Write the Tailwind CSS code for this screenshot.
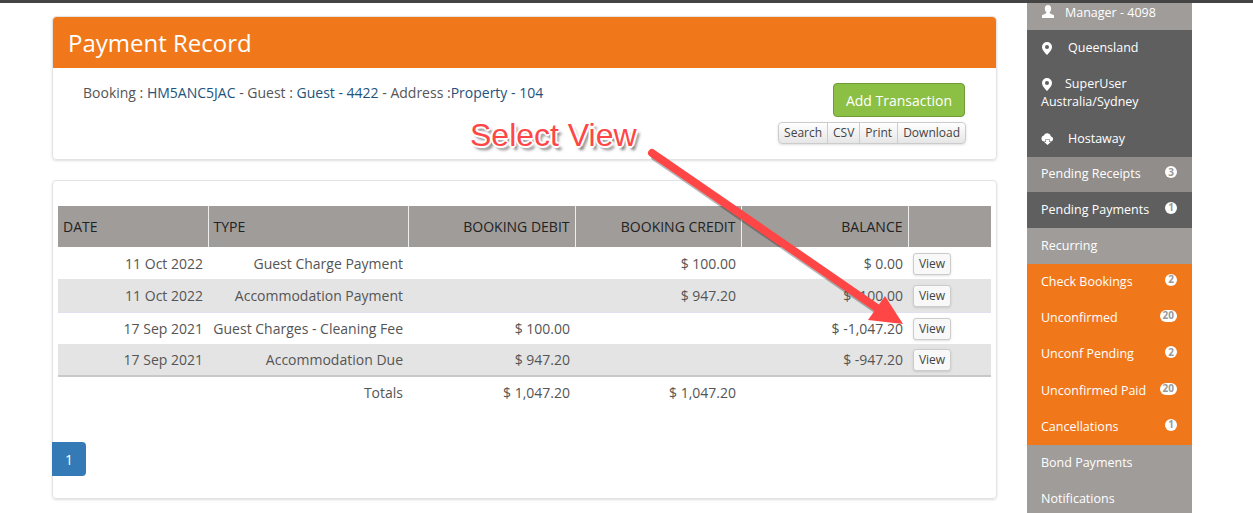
<!DOCTYPE html>
<html lang="en">
<head>
    <meta charset="UTF-8">
    <title>Payment Record</title>
    <script src="https://cdn.jsdelivr.net/npm/@tailwindcss/browser@4"></script>
</head>
<body class="relative h-[513px] w-[1253px] overflow-hidden bg-white font-['Open_Sans',sans-serif] text-[14px] text-[#555]">
    <div class="h-[3px] bg-[#444]"></div>
    <div class="flex items-start">
        <!-- main column -->
        <div class="ml-[52px] w-[945px] pt-[13px]">
            <div class="h-[144px] rounded border border-[#e3e3e3] shadow-sm">
                <div class="flex h-[51px] items-center rounded-t bg-[#f0781a] pl-[15px] text-[24px] text-white">Payment Record</div>
                <div class="flex justify-between pl-[30px] pr-[30px]">
                    <p class="pt-[15px] leading-[20px]">Booking : <span class="text-[#23527c]">HM5ANC5JAC</span> - Guest : <span class="text-[#23527c]">Guest - 4422</span> - Address :<span class="text-[#23527c]">Property - 104</span></p>
                    <div class="flex flex-col items-end pt-[15px]">
                        <button class="mr-px h-[34px] w-[132px] rounded border border-[#6f9c36] bg-[#8cc044] text-[14px] text-white">Add Transaction</button>
                        <div class="mt-[5px] flex h-[22px] rounded border border-[#ccc] bg-gradient-to-b from-white to-[#e6e6e6] text-[12px] leading-[20px] text-[#444] shadow-sm">
                            <span class="border-r border-[#ccc] px-[5px]">Search</span>
                            <span class="border-r border-[#ccc] px-[5px]">CSV</span>
                            <span class="border-r border-[#ccc] px-[5px]">Print</span>
                            <span class="px-[5px]">Download</span>
                        </div>
                    </div>
                </div>
            </div>
            <div class="relative mt-[20px] h-[319px] rounded border border-[#e3e3e3] px-[5px] pt-[25px] shadow-sm">
                <table class="w-[933px] table-fixed border-collapse">
                    <colgroup>
                        <col class="w-[150px]"><col class="w-[200px]"><col class="w-[167px]"><col class="w-[166px]"><col class="w-[167px]"><col class="w-[83px]">
                    </colgroup>
                    <thead>
                        <tr class="h-[41px] bg-[#a09c9a] text-[#222]">
                            <th class="px-[5px] text-left font-normal">DATE</th>
                            <th class="border-l border-[#eee] px-[5px] text-left font-normal">TYPE</th>
                            <th class="border-l border-[#eee] px-[5px] text-right font-normal">BOOKING DEBIT</th>
                            <th class="border-l border-[#eee] px-[5px] text-right font-normal">BOOKING CREDIT</th>
                            <th class="border-l border-[#eee] px-[5px] text-right font-normal">BALANCE</th>
                            <th class="border-l border-[#eee]"></th>
                        </tr>
                    </thead>
                    <tbody class="text-right">
                        <tr class="h-[32px]">
                            <td class="px-[5px]">11 Oct 2022</td><td class="px-[5px]">Guest Charge Payment</td><td class="px-[5px]"></td><td class="px-[5px]">$ 100.00</td><td class="px-[5px]">$ 0.00</td>
                            <td class="px-[5px] text-left"><button class="h-[22px] w-[38px] rounded-[3px] border border-[#ccc] bg-[#f8f8f8] text-[12px] text-[#444] shadow-sm">View</button></td>
                        </tr>
                        <tr class="h-[33px] border-b border-[#e0e0ee] bg-[#e4e4e4]">
                            <td class="px-[5px]">11 Oct 2022</td><td class="px-[5px]">Accommodation Payment</td><td class="px-[5px]"></td><td class="px-[5px]">$ 947.20</td><td class="px-[5px]">$ -100.00</td>
                            <td class="px-[5px] text-left"><button class="h-[22px] w-[38px] rounded-[3px] border border-[#ccc] bg-[#f8f8f8] text-[12px] text-[#444] shadow-sm">View</button></td>
                        </tr>
                        <tr class="h-[32px]">
                            <td class="px-[5px]">17 Sep 2021</td><td class="px-[5px]">Guest Charges - Cleaning Fee</td><td class="px-[5px]">$ 100.00</td><td class="px-[5px]"></td><td class="px-[5px]">$ -1,047.20</td>
                            <td class="px-[5px] text-left"><button class="h-[22px] w-[38px] rounded-[3px] border border-[#ccc] bg-[#f8f8f8] text-[12px] text-[#444] shadow-sm">View</button></td>
                        </tr>
                        <tr class="h-[32px] bg-[#e4e4e4]">
                            <td class="px-[5px]">17 Sep 2021</td><td class="px-[5px]">Accommodation Due</td><td class="px-[5px]">$ 947.20</td><td class="px-[5px]"></td><td class="px-[5px]">$ -947.20</td>
                            <td class="px-[5px] text-left"><button class="h-[22px] w-[38px] rounded-[3px] border border-[#ccc] bg-[#f8f8f8] text-[12px] text-[#444] shadow-sm">View</button></td>
                        </tr>
                        <tr class="h-[31px] border-t-2 border-[#c8c8c8]">
                            <td></td><td class="px-[5px]">Totals</td><td class="px-[5px]">$ 1,047.20</td><td class="px-[5px]">$ 1,047.20</td><td></td><td></td>
                        </tr>
                    </tbody>
                </table>
                <div class="-ml-[6px] mt-[35px] flex h-[34px] w-[34px] items-center justify-center rounded-r bg-[#337ab7] text-[14px] text-white">1</div>
            </div>
        </div>
        <!-- sidebar -->
        <div class="ml-[30px] w-[165px] text-[12.5px] text-white">
            <div class="flex h-[27px] items-start bg-[#a09c9a] pl-[14px] pt-[1px]">
                <svg class="mt-[1px] h-[14px] w-[14px]" viewBox="0 0 14 14" fill="#fff"><path d="M7 0c2 0 3.200 1.500 3.200 3.600 0 1.500-.7 3-1.500 3.700v1l4.300 2V13H1v-2.700l4.300-2v-1C4.500 6.600 3.800 5.100 3.800 3.600 3.800 1.500 5 0 7 0z"/></svg>
                <span class="ml-[10px]">Manager - 4098</span>
            </div>
            <div class="bg-[#5f5f5f]">
                <div class="flex h-[36px] items-center pl-[15px]">
                    <svg class="h-[13px] w-[10px]" viewBox="0 0 10 13"><path fill="#fff" fill-rule="evenodd" d="M5 0a5 5 0 0 1 5 5c0 2.800-3 6-5 8-2-2-5-5.200-5-8a5 5 0 0 1 5-5zm0 3a2 2 0 1 0 0 4 2 2 0 0 0 0-4z"/></svg>
                    <span class="ml-[16px]">Queensland</span>
                </div>
                <div class="h-[55px] pl-[14px] pt-[9px] leading-[18px]">
                    <div class="flex items-center pl-[1px]">
                        <svg class="h-[13px] w-[10px]" viewBox="0 0 10 13"><path fill="#fff" fill-rule="evenodd" d="M5 0a5 5 0 0 1 5 5c0 2.800-3 6-5 8-2-2-5-5.200-5-8a5 5 0 0 1 5-5zm0 3a2 2 0 1 0 0 4 2 2 0 0 0 0-4z"/></svg>
                        <span class="ml-[13px]">SuperUser</span>
                    </div>
                    <div>Australia/Sydney</div>
                </div>
                <div class="flex h-[36px] items-center pl-[14px]">
                    <svg class="h-[12px] w-[13px]" viewBox="0 0 13 12"><path fill="#fff" d="M3 8.500A3 3 0 0 1 2.800 2.600 3.800 3.800 0 0 1 10 3.400a2.600 2.600 0 0 1 0 5.100H8.500V6h-4v2.500zM5 6.500h3v2.500h1.800L6.500 12 3.200 9H5z"/></svg>
                    <span class="ml-[14px]">Hostaway</span>
                </div>
            </div>
            <div class="flex h-[35px] items-center justify-between bg-[#918d8b] pl-[14px] pr-[15px]"><span>Pending Receipts</span><span class="-mt-[5px] flex h-[12px] min-w-[12px] items-center justify-center rounded-full bg-white px-[3px] text-[10px] font-bold text-[#999]">3</span></div>
            <div class="flex h-[36px] items-center justify-between bg-[#5f5f5f] pl-[14px] pr-[15px]"><span>Pending Payments</span><span class="-mt-[5px] flex h-[12px] min-w-[12px] items-center justify-center rounded-full bg-white px-[3px] text-[10px] font-bold text-[#999]">1</span></div>
            <div class="flex h-[36px] items-center justify-between bg-[#a09c9a] pl-[14px] pr-[15px]"><span>Recurring</span></div>
            <div class="bg-[#f0781a]">
                <div class="flex h-[36px] items-center justify-between pl-[14px] pr-[15px]"><span>Check Bookings</span><span class="-mt-[5px] flex h-[12px] min-w-[12px] items-center justify-center rounded-full bg-white px-[3px] text-[10px] font-bold text-[#999]">2</span></div>
                <div class="flex h-[36px] items-center justify-between pl-[14px] pr-[15px]"><span>Unconfirmed</span><span class="-mt-[5px] flex h-[12px] min-w-[12px] items-center justify-center rounded-full bg-white px-[3px] text-[10px] font-bold text-[#999]">20</span></div>
                <div class="flex h-[37px] items-center justify-between pl-[14px] pr-[15px]"><span>Unconf Pending</span><span class="-mt-[5px] flex h-[12px] min-w-[12px] items-center justify-center rounded-full bg-white px-[3px] text-[10px] font-bold text-[#999]">2</span></div>
                <div class="flex h-[36px] items-center justify-between pl-[14px] pr-[15px]"><span>Unconfirmed Paid</span><span class="-mt-[5px] flex h-[12px] min-w-[12px] items-center justify-center rounded-full bg-white px-[3px] text-[10px] font-bold text-[#999]">20</span></div>
                <div class="flex h-[36px] items-center justify-between pl-[14px] pr-[15px]"><span>Cancellations</span><span class="-mt-[5px] flex h-[12px] min-w-[12px] items-center justify-center rounded-full bg-white px-[3px] text-[10px] font-bold text-[#999]">1</span></div>
            </div>
            <div class="bg-[#a09c9a]">
                <div class="flex h-[36px] items-center pl-[14px]">Bond Payments</div>
                <div class="flex h-[36px] items-center pl-[14px]">Notifications</div>
            </div>
        </div>
    </div>

    <!-- annotation drawn over the screenshot -->
    <svg class="absolute left-0 top-0 h-[513px] w-[1253px]" viewBox="0 0 1253 513">
        <g transform="translate(3 4)" fill="#000" stroke="#000" opacity="0.28">
            <path d="M652 153L877 308" stroke-width="8" stroke-linecap="round"/>
        </g>
        <path d="M652 153L877 308" stroke="#ff4646" stroke-width="8" stroke-linecap="round"/>
        <path d="M903 324L868 320L885 296Z" fill="#ff4646"/>
    </svg>
    <div class="absolute left-[470px] top-[116px] font-['Liberation_Sans',sans-serif] text-[32px] leading-[38px] text-[#ff4646] [text-shadow:-1px_-1px_0_#fff,1px_-1px_0_#fff,-1px_1px_0_#fff,1px_1px_0_#fff,0_-2px_0_#fff,2px_0_0_#fff,0_2px_0_#fff,-2px_0_0_#fff,3px_4px_3px_#777]">Select View</div>
</body>
</html>
